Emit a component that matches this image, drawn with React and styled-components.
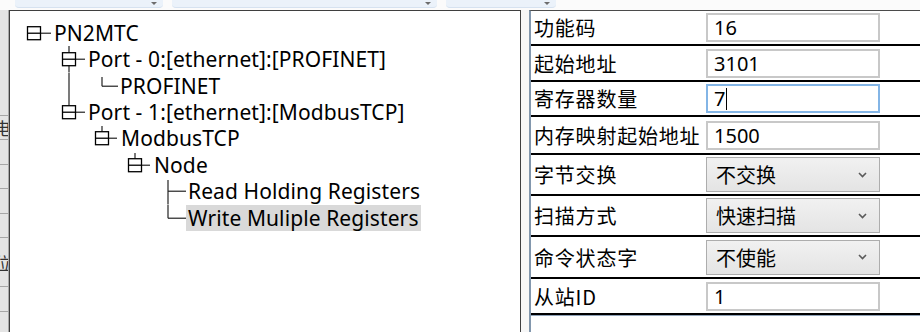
import React from "react"
import styled, { createGlobalStyle } from "styled-components"

const GlobalStyle = createGlobalStyle`
  html, body {
    margin: 0;
    padding: 0;
    background: #f0f0f0;
  }
  * {
    box-sizing: border-box;
  }
`

const ROW_H = 26.43
const MID = ROW_H / 2

const Screen = styled.div`
  width: 920px;
  height: 332px;
  overflow: hidden;
  display: flex;
  flex-direction: column;
  background: #f3f3f3;
  font-family: "Noto Sans", "Noto Sans CJK SC", sans-serif;
`

const TopBar = styled.div`
  height: 10px;
  flex: none;
  display: flex;
  padding-left: 15px;
  gap: 9px;
  background: #fbfbfb;
`

const Combo = styled.div`
  position: relative;
  width: ${props => props.w}px;
  height: 8px;
  background: #ebf2fa;
  border-bottom: 1px solid #d6e2f0;
  border-radius: 0 0 4px 4px;
  &::after {
    content: "";
    position: absolute;
    right: 6px;
    top: 2px;
    border-left: 3px solid transparent;
    border-right: 3px solid transparent;
    border-top: 3px solid #6d6d6d;
  }
`

const Body = styled.div`
  flex: 1;
  display: flex;
  min-height: 0;
`

const Strip = styled.div`
  width: 9px;
  flex: none;
  display: flex;
  flex-direction: column;
  background: #e4e4e4;
  border-right: 1px solid #a9a9a9;
  padding-top: 105px;
`

const StripCell = styled.div`
  height: ${props => props.h}px;
  flex: none;
  border-top: 1px solid #a6a6a6;
  display: flex;
  align-items: center;
  justify-content: flex-end;
  overflow: hidden;
  font-family: "Noto Sans CJK SC", sans-serif;
  font-size: 17px;
  line-height: 1;
  color: #333;
  span {
    margin-right: -3px;
  }
`

const TreePanel = styled.div`
  width: 512px;
  flex: none;
  background: #fff;
  border: 1px solid #3f3f3f;
  border-bottom: none;
  padding-top: 8.8px;
`

const Row = styled.div`
  height: ${ROW_H}px;
  display: flex;
  align-items: center;
`

const Gutter = styled.svg`
  flex: none;
  display: block;
`

const Label = styled.span`
  font-size: 21px;
  letter-spacing: 0.1px;
  line-height: ${ROW_H}px;
  color: #000;
  white-space: nowrap;
  padding: 0 ${props => (props.selected ? "2px" : "0")};
  background: ${props => (props.selected ? "#d9d9d9" : "transparent")};
`

const Divider = styled.div`
  width: 8px;
  flex: none;
  background: #f7f7f7;
`

const PropPanel = styled.div`
  flex: 1;
  background: #fff;
  border-top: 1px solid #4b4b4b;
  border-left: 2px solid #8297ad;
  display: flex;
  flex-direction: column;
`

const PropRow = styled.div`
  height: ${props => props.h}px;
  flex: none;
  display: flex;
  align-items: center;
  border-bottom: 2px solid #000;
  &:last-child {
    box-shadow: 0 1px 0 #8ea2b8;
  }
`

const PropName = styled.div`
  width: 175px;
  flex: none;
  padding-left: 3px;
  font-family: "Noto Sans CJK SC", sans-serif;
  font-size: 20px;
  letter-spacing: 0.8px;
  color: #000;
  white-space: nowrap;
`

const TextBox = styled.div`
  width: 174px;
  height: 29px;
  flex: none;
  display: flex;
  align-items: center;
  padding-left: 6px;
  border: 2px solid ${props => (props.focused ? "#83b5e6" : "#c8c8c8")};
  background: #fff;
  font-size: 20px;
  color: #000;
`

const Caret = styled.span`
  width: 0;
  height: 22px;
  border-left: 1.5px solid #000;
  margin-left: 1px;
`

const Select = styled.div`
  width: 174px;
  height: 35px;
  flex: none;
  display: flex;
  align-items: center;
  justify-content: space-between;
  padding: 0 12px 0 9px;
  border: 1px solid #adadad;
  background: linear-gradient(#f1f1f1, #e4e4e4);
  font-family: "Noto Sans CJK SC", sans-serif;
  font-size: 20px;
  color: #000;
`

const Chevron = () => (
  <svg width="9" height="6" viewBox="0 0 9 6">
    <polyline points="1,1 4.5,4.5 8,1" fill="none" stroke="#5a5a5a" strokeWidth="1.6" />
  </svg>
)

const Box = ({ x }) => (
  <g>
    <rect x={x + 0.5} y={MID - 6.5} width="13" height="13" fill="#fff" stroke="#000" strokeWidth="1.3" />
    <line x1={x + 0.5} y1={MID} x2={x + 13.5} y2={MID} stroke="#000" strokeWidth="1.3" />
  </g>
)

const L = ({ x1, y1, x2, y2 }) => (
  <line x1={x1} y1={y1} x2={x2} y2={y2} stroke="#222" strokeWidth="1.2" />
)

const treeRows = [
  {
    label: "PN2MTC",
    w: 44,
    draw: (
      <>
        <L x1={31} y1={MID} x2={41} y2={MID} />
        <Box x={17} />
      </>
    ),
  },
  {
    label: "Port - 0:[ethernet]:[PROFINET]",
    w: 78,
    draw: (
      <>
        <L x1={59} y1={0} x2={59} y2={ROW_H} />
        <L x1={66} y1={MID} x2={75} y2={MID} />
        <Box x={52} />
      </>
    ),
  },
  {
    label: "PROFINET",
    w: 110,
    draw: (
      <>
        <L x1={59} y1={0} x2={59} y2={ROW_H} />
        <L x1={92} y1={4} x2={92} y2={MID} />
        <L x1={92} y1={MID} x2={108} y2={MID} />
      </>
    ),
  },
  {
    label: "Port - 1:[ethernet]:[ModbusTCP]",
    w: 78,
    draw: (
      <>
        <L x1={59} y1={0} x2={59} y2={MID} />
        <L x1={66} y1={MID} x2={75} y2={MID} />
        <Box x={52} />
      </>
    ),
  },
  {
    label: "ModbusTCP",
    w: 111,
    draw: (
      <>
        <L x1={92} y1={1} x2={92} y2={MID} />
        <L x1={99} y1={MID} x2={107} y2={MID} />
        <Box x={85} />
      </>
    ),
  },
  {
    label: "Node",
    w: 144,
    draw: (
      <>
        <L x1={125} y1={1} x2={125} y2={MID} />
        <L x1={132} y1={MID} x2={140} y2={MID} />
        <Box x={118} />
      </>
    ),
  },
  {
    label: "Read Holding Registers",
    w: 178,
    draw: (
      <>
        <L x1={158} y1={2} x2={158} y2={ROW_H} />
        <L x1={158} y1={MID} x2={176} y2={MID} />
      </>
    ),
  },
  {
    label: "Write Muliple Registers",
    w: 176,
    selected: true,
    draw: (
      <>
        <L x1={158} y1={0} x2={158} y2={MID} />
        <L x1={158} y1={MID} x2={176} y2={MID} />
      </>
    ),
  },
]

const props = [
  { name: "功能码", h: 35, value: "16" },
  { name: "起始地址", h: 36, value: "3101" },
  { name: "寄存器数量", h: 35, value: "7", focused: true },
  { name: "内存映射起始地址", h: 38, value: "1500" },
  { name: "字节交换", h: 41, option: "不交换" },
  { name: "扫描方式", h: 41, option: "快速扫描" },
  { name: "命令状态字", h: 42, option: "不使能" },
  { name: "从站ID", h: 36, value: "1" },
]

const stripCells = [
  { h: 24, ch: "电" },
  { h: 25 },
  { h: 24 },
  { h: 25 },
  { h: 24 },
  { h: 49, ch: "位" },
  { h: 25 },
  { h: 30 },
]

export default function App() {
  return (
    <>
      <GlobalStyle />
      <Screen>
        <TopBar>
          <Combo w={148} />
          <Combo w={265} />
          <Combo w={110} />
        </TopBar>
        <Body>
          <Strip>
            {stripCells.map((c, i) => (
              <StripCell key={i} h={c.h}>
                {c.ch && <span>{c.ch}</span>}
              </StripCell>
            ))}
          </Strip>
          <TreePanel>
            {treeRows.map(r => (
              <Row key={r.label}>
                <Gutter width={r.w} height={ROW_H}>
                  {r.draw}
                </Gutter>
                <Label selected={r.selected}>{r.label}</Label>
              </Row>
            ))}
          </TreePanel>
          <Divider />
          <PropPanel>
            {props.map(p => (
              <PropRow key={p.name} h={p.h}>
                <PropName>{p.name}</PropName>
                {p.option ? (
                  <Select>
                    <span>{p.option}</span>
                    <Chevron />
                  </Select>
                ) : (
                  <TextBox focused={p.focused}>
                    {p.value}
                    {p.focused && <Caret />}
                  </TextBox>
                )}
              </PropRow>
            ))}
          </PropPanel>
        </Body>
      </Screen>
    </>
  )
}
